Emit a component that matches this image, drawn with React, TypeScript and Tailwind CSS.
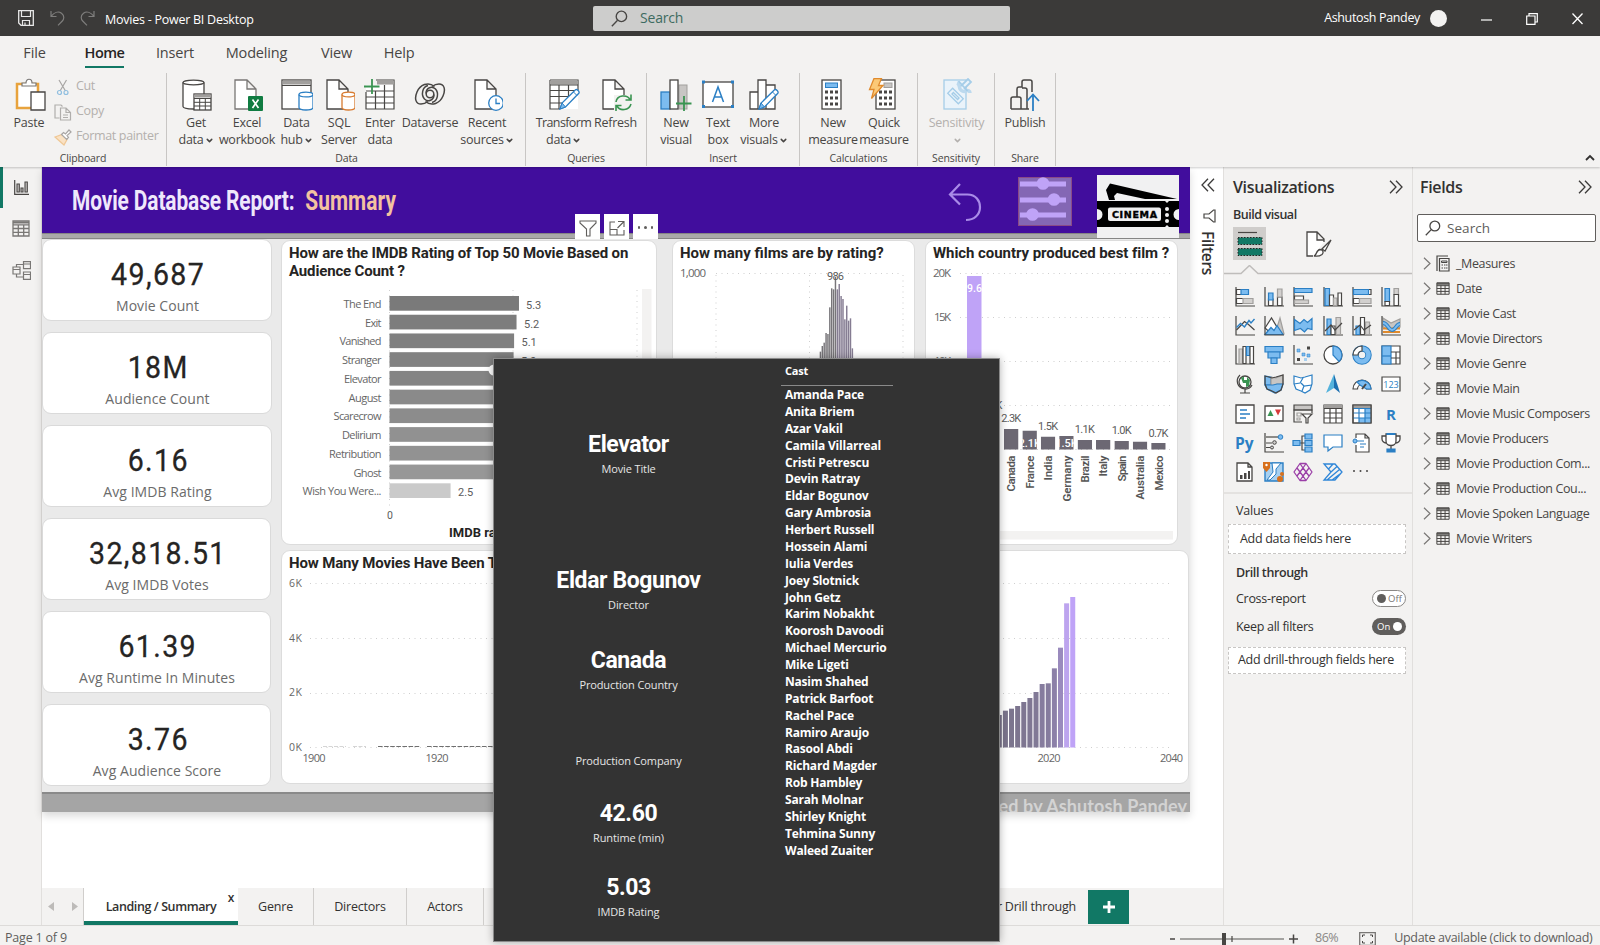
import React from "react";
import { ChevronDown } from "lucide-react";

const K = "#484644";
const G = "#a19f9d";
const B = "#2b7fc4";
const L = "#7cbcf0";

type IconProps = { w?: number; h?: number; vb?: string; className?: string; children: React.ReactNode };
function Svg({ w = 20, h = 20, vb, className, children }: IconProps) {
  return (
    <svg width={w} height={h} viewBox={vb ?? `0 0 ${w} ${h}`} fill="none" className={"block shrink-0 " + (className ?? "")}>
      {children}
    </svg>
  );
}

function Magnifier({ size = 16, color = K }: { size?: number; color?: string }) {
  return (
    <Svg w={size} h={size} vb="0 0 16 16">
      <circle cx="9.8" cy="6" r="4.9" stroke={color} strokeWidth="1.3" />
      <path d="M6.2 9.6L.8 15.2" stroke={color} strokeWidth="1.3" />
    </Svg>
  );
}

function DoubleChevron({ left, className }: { left?: boolean; className?: string }) {
  return (
    <Svg w={14} h={14} className={className}>
      <path d={left ? "M7 .8L1 7l6 6.200M13 .8L7 7l6 6.200" : "M1 .8L7 7l-6 6.200M7 .8L13 7l-6 6.200"} stroke="#3b3a39" strokeWidth="1.300" />
    </Svg>
  );
}

/* ---------- title bar ---------- */
function TitleBar() {
  return (
    <div className="flex h-9 shrink-0 items-center bg-[#3b3a39] text-white">
      <div className="flex w-[593px] items-center pl-[18px]">
        <Svg w={16} h={16}>
          <path d="M.7.7h14.600v14.600H3L.7 13z" stroke="#e8e8e8" strokeWidth="1.300" />
          <path d="M3.500 1v5.500h9V1M4.500 15v-4.500h7V15M7 15v-2.500" stroke="#e8e8e8" strokeWidth="1.200" />
        </Svg>
        <Svg w={15} h={16} className="ml-[16px]">
          <path d="M1 1v5.500h5.500M1.300 6.200C4 2.600 8 .8 11.500 3.200c3.500 2.700 2.300 6.300.8 7.800L8 15.300" stroke="#7f7e7d" strokeWidth="1.200" />
        </Svg>
        <Svg w={15} h={16} className="ml-[15px]">
          <path d="M14 1v5.500H8.500M13.700 6.200C11 2.600 7 .8 3.500 3.200 0 5.900 1.200 9.500 2.700 11L7 15.300" stroke="#7f7e7d" strokeWidth="1.200" />
        </Svg>
        <span className="mt-[4px] ml-[10px] text-[12.500px] tracking-[-0.25px]">Movies - Power BI Desktop</span>
      </div>
      <div className="flex h-[25px] w-[417px] items-center rounded-[2px] bg-[#cdcdcc] pl-[18px]">
        <Magnifier size={17} />
        <span className="mb-[2px] ml-[12px] text-[14px] tracking-[-0.2px] text-[#3d6b60]">Search</span>
      </div>
      <div className="flex flex-1 items-center justify-end pr-[17px]">
        <span className="text-[12.500px] tracking-[-0.350px]">Ashutosh Pandey</span>
        <div className="ml-[10px] size-[17px] rounded-full bg-[#f3f2f1]" />
        <Svg w={11} h={12} className="ml-[34px]"><path d="M0 8h11" stroke="#fff" strokeWidth="1.200" /></Svg>
        <Svg w={12} h={12} className="mt-[2px] ml-[34px]">
          <path d="M.7 3h8.300v8.300H.7zM3 3V.7h8.300V9H9" stroke="#fff" strokeWidth="1.200" />
        </Svg>
        <Svg w={11} h={12} className="mt-[2px] ml-[34px]"><path d="M.5.500l10 10.500M10.500.5L.5 11" stroke="#fff" strokeWidth="1.300" /></Svg>
      </div>
    </div>
  );
}

/* ---------- ribbon ---------- */
const menu: [string, string][] = [
  ["File", "w-[21px]"], ["Home", "w-[39px] ml-[40px]"], ["Insert", "w-[36px] ml-[33px]"],
  ["Modeling", "w-[61px] ml-[33px]"], ["View", "w-[31px] ml-[34px]"], ["Help", "w-[30px] ml-[32px]"],
];

const cyl = (x: number, y: number, w: number, h: number, c: string, f = "#fff") => (
  <>
    <path d={`M${x} ${y + 2.500}v${h - 5}c0 3.300 ${w} 3.300 ${w} 0v-${h - 5}`} fill={f} stroke={c} strokeWidth="1.300" />
    <ellipse cx={x + w / 2} cy={y + 2.500} rx={w / 2} ry="2.400" fill={f} stroke={c} strokeWidth="1.300" />
  </>
);
const page = (x: number, w: number, c = K) => (
  <path d={`M${x} 2h${w - 9}l9 9v20h-${w}zM${x + w - 9} 2v9h9`} fill="#fff" stroke={c} strokeWidth="1.300" />
);
const pencil = (x: number, y: number) => (
  <g transform={`translate(${x} ${y})`}>
    <path d="M1 20l2-6L16.500.8c1.500-1 4.500 1.700 3.300 3.500L6.500 18z" fill="#fff" stroke={B} strokeWidth="1.300" />
    <path d="M3 14l3.500 4L1 20zM14.500 3l3.500 3.500" stroke={B} fill={L} />
  </g>
);
const calc = (x: number) => (
  <>
    <rect x={x} y="2" width="19" height="29" fill="#fff" stroke={K} strokeWidth="1.300" />
    {[0, 1, 2].flatMap((r) => [0, 1, 2].map((c) => <rect key={`${r}${c}`} x={x + 3 + c * 5} y={12.500 + r * 6} width="3" height="3" fill={K} />))}
  </>
);
const icons: Record<string, React.ReactNode> = {
  get: <>{cyl(3, 2, 21, 29, K)}<rect x="14" y="16" width="17" height="16" fill="#fff" stroke={K} strokeWidth="1.300" /><path d="M14 18h17" stroke={G} strokeWidth="3" /><path d="M14 20.500h17M14 24.300h17M14 28h17M19.700 20v12M25.300 20v12" stroke={K} /></>,
  excel: <>{page(4, 21, "#797775")}<rect x="17" y="18" width="15" height="15" rx="1" fill="#107c41" /><path d="M21.500 21.500l6 8.500m0-8.500l-6 8.500" stroke="#fff" strokeWidth="1.700" /></>,
  hub: <><rect x="1" y="2" width="29" height="29" fill="#fff" stroke={K} strokeWidth="1.300" /><path d="M1.500 4.500h28" stroke={G} strokeWidth="4" /><path d="M1 7.500h29" stroke={K} />{cyl(18, 14, 14, 18, B)}</>,
  sql: <>{page(4, 21)}{cyl(19, 14, 13, 18, "#d87b30")}</>,
  enter: <><path d="M2 7h28v24H2z" fill="#fff" /><path d="M12 2h18v29H2V14M2 13h28M2 19h28M2 25h28M11.500 13v18M20.500 7v24" stroke={K} strokeWidth="1.200" /><path d="M13 4.500h17" stroke={G} strokeWidth="4" /><path d="M0 8.500h15.500M8 1v15" stroke="#3a9452" strokeWidth="1.800" /></>,
  dataverse: (
    <g stroke={K} strokeWidth="1.500">
      <path d="M20.500 8.500C14 3 6 7 3 14c-3 7-1 12 4 12 3 0 5-1 7-2.500" />
      <path d="M11.500 23.500C18 29 26 25 29 18c3-7 1-12-4-12-3 0-5 1-7 2.500" />
      <path d="M14 7.500C8 9 7 17 10.500 21c3.500 3.500 9.500 1.500 9.500-4.500" />
      <path d="M18 24.500C24 23 25 15 21.500 11 18 7.500 12 9.500 12 15.500" />
      <circle cx="16" cy="16" r="3.800" />
    </g>
  ),
  recent: <>{page(4, 21)}<circle cx="25" cy="25" r="7.300" fill="#fff" stroke={B} strokeWidth="1.300" /><path d="M25 20.500v5h4" stroke={B} strokeWidth="1.300" /></>,
  transform: <><rect x="2" y="2" width="28" height="29" fill="#fff" /><path d="M2 2h28v10M2 2v29h10M2 12.500h28M2 18.500h20M2 25h14M11 7v24M20.500 7v14" stroke={K} strokeWidth="1.200" /><path d="M2 4.500h28" stroke={G} strokeWidth="4" /><path d="M2 7h28" stroke={K} />{pencil(11, 11)}</>,
  refresh: <>{page(3, 21)}<path d="M14 17h18v16H14z" fill="#f3f2f1" /><path d="M16 24c1-7 11-8 14-2.500M31 16.500v5.500h-5.500M31 26c-2 6.500-11 7.500-14 2M16 33v-5.500h5.500" stroke="#3a9452" strokeWidth="1.600" /></>,
  visual: <><rect x="19" y="7" width="8" height="24" fill="#c8c6c4" stroke={G} /><rect x="1" y="14" width="9" height="17" fill={L} stroke={B} strokeWidth="1.300" /><rect x="10" y="2" width="8" height="29" fill="#fff" stroke={K} strokeWidth="1.300" /><path d="M16 25.500h15.500M24 18v15" stroke="#3a9452" strokeWidth="1.800" /></>,
  text: <><rect x="1" y="4" width="30" height="25" fill="#fff" stroke={K} strokeWidth="1.300" /><path d="M10.500 24L16 9l5.500 15M12.500 19h7" stroke={B} strokeWidth="1.500" />{[[0, 2.500], [29, 2.500], [0, 27], [29, 27]].map(([x, y], i) => <rect key={i} x={x} y={y} width="3" height="3" fill={B} />)}</>,
  more: <><path d="M2 14h8v17H2zM10 2h8v29h-8zM18 7h9v24h-9z" fill="#fff" stroke={K} strokeWidth="1.300" />{pencil(10, 11)}</>,
  measure: <>{calc(5)}<rect x="8.500" y="5" width="12" height="4.500" fill={L} stroke={B} /></>,
  quick: <>{calc(8)}<rect x="16" y="5" width="8" height="4.500" fill="#c8c6c4" stroke={G} /><path d="M6 .5h7.500l-3 7h4.500L3.500 20.500l2.500-9H1.500z" fill="#fbc977" stroke="#e08a2c" strokeWidth="1.300" /></>,
  sens: (
    <g stroke="#a5cde8" strokeWidth="1.300">
      <rect x="3" y="2" width="22" height="29" fill="#eaf3fa" />
      <rect x="-7.500" y="-3.500" width="15" height="7" transform="translate(14.500 18) rotate(45)" fill="#eaf3fa" />
      <rect x="-4" y="-1" width="8" height="2" transform="translate(14.500 18) rotate(45)" />
      <path d="M16 5c3 1 2 4 3 6s4 3 6 2 4 0 4 2" strokeWidth="3.500" stroke="#bcd9ee" />
      <path d="M20 8l7-7 3 3-7 7M17.500 3l9 10" fill="#eaf3fa" strokeWidth="1.800" />
    </g>
  ),
  publish: <><path d="M2 31V21a2 2 0 012-2h4V11a2 2 0 012-2h3V4a2 2 0 012-2h6a2 2 0 012 2v10M2 31h18M12 31V21a2 2 0 00-2-2H8M18 31V12a2 2 0 00-2-2h-3" stroke={K} strokeWidth="1.500" /><path d="M24 33V17M18 23l6-6.500 6 6.500" stroke={B} strokeWidth="1.800" /></>,
};

type Btn = { icon: string; a: string; b?: string; caret?: boolean; w: string; dim?: boolean; tight?: boolean };
function RibbonButton({ icon, a, b, caret, w, dim, tight }: Btn) {
  return (
    <div className={`flex shrink-0 flex-col items-center ${w} ${dim ? "text-[#b3b0ad]" : "text-[#484644]"}`}>
      <Svg w={32} h={34}>{icons[icon]}</Svg>
      <span className={`mt-[3px] h-[16px] text-[12.500px] leading-[16px] whitespace-nowrap ${tight ? "tracking-[-0.6px]" : "tracking-[-0.25px]"}`}>{a}</span>
      <span className="flex h-[17px] items-center text-[12.500px] leading-[17px] tracking-[-0.25px] whitespace-nowrap">
        {b}{caret && <ChevronDown size={9} strokeWidth={4} className="mt-[2px] ml-[1px]" />}
      </span>
    </div>
  );
}
const groups: { name: string; w: string; items: Btn[] }[] = [
  { name: "Data", w: "w-[359px] pl-px", items: [
    { icon: "get", a: "Get", b: "data", caret: true, w: "w-[56px]" }, { icon: "excel", a: "Excel", b: "workbook", w: "w-[46px]" },
    { icon: "hub", a: "Data", b: "hub", caret: true, w: "w-[53px]" }, { icon: "sql", a: "SQL", b: "Server", w: "w-[32px]" },
    { icon: "enter", a: "Enter", b: "data", w: "w-[50px]" }, { icon: "dataverse", a: "Dataverse", w: "w-[50px]" },
    { icon: "recent", a: "Recent", b: "sources", caret: true, w: "w-[64px]" }] },
  { name: "Queries", w: "w-[121px]", items: [{ icon: "transform", a: "Transform", b: "data", caret: true, w: "w-[75px]", tight: true }, { icon: "refresh", a: "Refresh", w: "w-[29px]" }] },
  { name: "Insert", w: "w-[153px]", items: [{ icon: "visual", a: "New", b: "visual", w: "w-[58px]" }, { icon: "text", a: "Text", b: "box", w: "w-[26px]" }, { icon: "more", a: "More", b: "visuals", caret: true, w: "w-[66px]" }] },
  { name: "Calculations", w: "w-[118px]", items: [{ icon: "measure", a: "New", b: "measure", w: "w-[66px]" }, { icon: "quick", a: "Quick", b: "measure", w: "w-[36px]" }] },
  { name: "Sensitivity", w: "w-[77px]", items: [{ icon: "sens", a: "Sensitivity", caret: true, w: "w-[77px]", dim: true }] },
  { name: "Share", w: "w-[61px]", items: [{ icon: "publish", a: "Publish", w: "w-[60px]" }] },
];

function Ribbon() {
  return (
    <div className="relative z-10 flex h-[131px] shrink-0 flex-col bg-[#f3f2f1] text-[#484644] shadow-[0_1px_2px_rgba(0,0,0,0.2)]">
      <div className="flex h-[37px] pl-[24px] text-[14.500px] tracking-[-0.15px]">
        {menu.map(([m, w]) => (
          <div key={m} className={`flex h-[32px] flex-col items-center ${w} ${m === "Home" ? "border-b-[2.500px] border-[#117865] font-semibold tracking-[-0.5px] text-[#252423]" : ""}`}>
            <span className="mt-[7px] leading-[20px] whitespace-nowrap">{m}</span>
          </div>
        ))}
      </div>
      <div className="flex h-[93px]">
        <div className="flex w-[167px] flex-col border-r border-[#c8c6c4]">
          <div className="flex h-[79px] pt-[5px] pl-[14px]">
            <div className="flex w-[30px] flex-col items-center">
              <Svg w={32} h={34} className="ml-[4px]">
                <path d="M2 6h21v24H2z" fill="#fff" stroke="#e8a33d" strokeWidth="2.500" />
                <path d="M7 8V5h4c0-5 6-5 6 0h4v3z" fill="#fff" stroke="#797775" strokeWidth="1.200" />
                <path d="M16 14h14v18H16z" fill="#fff" stroke={K} strokeWidth="1.300" />
              </Svg>
              <span className="mt-[3px] text-[12.500px] leading-[16px] tracking-[-0.2px]">Paste</span>
            </div>
            <div className="-mt-px ml-[10px] flex flex-col text-[12.500px] tracking-[-0.35px] text-[#b3b0ad]">
              <div className="flex h-[21px] items-center">
                <Svg w={18} h={17}><path d="M5 1l6.500 11M12.500 1L6 12" stroke="#a8a6a4" strokeWidth="1.200" /><circle cx="5.500" cy="13.500" r="2" stroke="#90bfe0" strokeWidth="1.200" /><circle cx="12" cy="13.500" r="2" stroke="#90bfe0" strokeWidth="1.200" /></Svg>
                <span className="mb-[2px] ml-[4px]">Cut</span>
              </div>
              <div className="mt-[4px] flex h-[21px] items-center">
                <Svg w={18} h={17}><path d="M5.500 14H1V1h6l1.500 1.500M6.500 4h5.500l4.500 4.500V16h-10zM12 4v4.500h4.500M9 11h5M9 13.500h5" stroke="#b0aeac" strokeWidth="1.200" /></Svg>
                <span className="mb-[2px] ml-[4px]">Copy</span>
              </div>
              <div className="mt-[4px] flex h-[21px] items-center">
                <Svg w={18} h={17}><path d="M1 8l7-2.500 5 5-3 5.500z" fill="#fae2c4" stroke="#efc795" strokeWidth="1.200" /><path d="M7.500 5.500l2-2 2 1.500L15 1l2 2-4 3.500 1.500 2-1.800 2z" fill="#fff" stroke="#a8a6a4" strokeWidth="1.200" /></Svg>
                <span className="mb-[2px] ml-[4px] whitespace-nowrap">Format painter</span>
              </div>
            </div>
          </div>
          <div className="text-center text-[10.500px] leading-[15px] tracking-[-0.1px]">Clipboard</div>
        </div>
        {groups.map((g) => (
          <div key={g.name} className={`flex flex-col border-r border-[#c8c6c4] ${g.w}`}>
            <div className="flex h-[79px] pt-[5px]">{g.items.map((b, i) => <RibbonButton key={i} {...b} />)}</div>
            <div className="text-center text-[10.500px] leading-[15px] tracking-[-0.1px]">{g.name}</div>
          </div>
        ))}
        <div className="flex flex-1 items-end justify-end pr-[5px] pb-[5px]">
          <Svg w={10} h={7}><path d="M1 6l4-4 4 4" stroke="#323130" strokeWidth="1.800" /></Svg>
        </div>
      </div>
    </div>
  );
}

/* ---------- left navigation ---------- */
function TableGlyph({ w, h, c = "#797775" }: { w: number; h: number; c?: string }) {
  return (
    <Svg w={w} h={h} vb="0 0 18 17">
      <path d="M1 1h16v15H1zM1 4.800h16M1 8.500h16M1 12.300h16M6.300 4.500V16M11.700 4.500V16" stroke={c} strokeWidth="1.300" />
      <path d="M1 2.500h16" stroke={c} strokeWidth="2" />
    </Svg>
  );
}
function LeftNav() {
  return (
    <div className="flex w-[42px] shrink-0 flex-col border-r border-[#e1dfdd] bg-[#f3f2f1]">
      <div className="flex h-[41px] items-start border-l-[3px] border-[#117865] pt-[13px] pl-[11px]">
        <Svg w={15} h={15}><path d="M.7 0v14.300H15" stroke={K} strokeWidth="1.200" /><path d="M3 4h2.300v8H3zM7 8h2v4H7zM11 2h2.300v10H11z" fill="#c8c6c4" stroke={K} strokeWidth="1.100" /></Svg>
      </div>
      <div className="mt-[12px] pl-[12px]"><TableGlyph w={18} h={17} /></div>
      <div className="mt-[24px] pl-[12px]">
        <Svg w={19} h={19}><path d="M1 6h7v7H1zM1 8.500h7M11.500.7h7v7h-7zM11.500 3h7M11.500 11h7v7.300h-7zM11.500 13.500h7M4.500 6V3.500h7M4.500 13v3h7" stroke="#797775" strokeWidth="1.200" /></Svg>
      </div>
    </div>
  );
}

/* ---------- report ---------- */
const kpis = [
  ["49,687", "Movie Count"], ["18M", "Audience Count"], ["6.16", "Avg IMDB Rating"],
  ["32,818.51", "Avg IMDB Votes"], ["61.39", "Avg Runtime In Minutes"], ["3.76", "Avg Audience Score"],
];

const axis = { fontFamily: "'Open Sans', sans-serif", fontSize: 11.500, fill: "#666" };
const din = { fontFamily: "Roboto, sans-serif", fontSize: 11, fill: "#5c5c5c" };
const dots = { stroke: "#cfcfcf", strokeWidth: 1, strokeDasharray: "1 4.500" };

const titles = ["The End", "Exit", "Vanished", "Stranger", "Elevator", "August", "Scarecrow", "Delirium", "Retribution", "Ghost", "Wish You Were..."];
const ratings = [5.3, 5.2, 5.1, 5.08, 5.03, 5, 4.9, 4.8, 4.8, 4.7, 2.5];
const greys = ["#7a7a7a", "#7d7d7d", "#808080", "#828282", "#848484", "#8a8a8a", "#8c8c8c", "#919191", "#929292", "#979797", "#cacaca"];
const titleW = [38, 16.500, 42, 39.500, 37.500, 33, 48, 39.500, 52.500, 28, 79];

function RatingChart() {
  return (
    <svg width="374" height="264" viewBox="282 280 374 264" className="block">
      {[389.500, 513, 637].map((x) => <path key={x} d={`M${x} 290V508`} {...dots} />)}
      {titles.map((t, i) => (
        <g key={t}>
          <rect x="389.500" y={296 + i * 18.730} width={ratings[i] * 24.430} height="14.700" fill={greys[i]} />
          <text x="381.500" y={308 + i * 18.730} textAnchor="end" textLength={titleW[i]} {...axis} fontSize="11">{t}</text>
        </g>
      ))}
      <text x="526" y="309" {...din}>5.3</text>
      <text x="524" y="327.500" {...din}>5.2</text>
      <text x="521.500" y="346" {...din}>5.1</text>
      <text x="521" y="365" {...din}>5.0</text>
      <text x="458" y="495.500" {...din}>2.5</text>
      <text x="390" y="519" textAnchor="middle" {...din} fontSize="10.500">0</text>
      <text x="449" y="537" {...din} fontSize="13" fontWeight="700" fill="#252423">IMDB rating</text>
      <rect x="642" y="289" width="9.500" height="220" fill="#f3f2f1" />
      <circle cx="494" cy="370" r="5.500" fill="#fff" />
    </svg>
  );
}

const hist = [575, 558, 548, 519, 522, 442, 385, 388, 350, 388, 372, 408, 417, 478, 437, 482, 475, 565];
function FilmsChart() {
  return (
    <svg width="241" height="280" viewBox="673 262 241 280" className="block">
      <path d="M716 273.500H903" {...dots} />
      {[716, 809.500, 903].map((x) => <path key={x} d={`M${x} 275V450`} {...dots} />)}
      <text x="680" y="277" textLength="26" {...axis}>1,000</text>
      {hist.map((t, i) => (
        <rect key={i} x={819.700 + i * 1.880} y={160 + t / 3} width="1.450" height={(700 - t) / 3} fill={i < 9 ? "#777579" : "#857c92"} />
      ))}
      <text x="827" y="280" textLength="17" {...din}>986</text>
    </svg>
  );
}

const countries: [string, number, string, boolean][] = [
  ["Canada", 429, "2.3K", true], ["France", 430.500, "2.1K", false], ["India", 436.500, "1.5K", true], ["Germany", 436, "1.5K", false],
  ["Brazil", 440, "1.1K", true], ["Italy", 440, "", false], ["Spain", 441, "1.0K", true], ["Australia", 441.500, "", false], ["Mexico", 443, "0.7K", true],
];
const countryLabelY = [422, 0, 429.500, 0, 433, 0, 433.500, 0, 436.500];
const countryW = [36, 33, 25, 46, 27, 21, 26, 44, 35];
function CountryChart() {
  return (
    <svg width="251" height="280" viewBox="926 262 251 280" className="block">
      {[273.500, 317.500, 361.500, 405.500, 449.500].map((y) => <path key={y} d={`M960 ${y}H1172`} {...dots} />)}
      <text x="933" y="277" textLength="18" {...axis}>20K</text>
      <text x="934" y="321" textLength="17" {...axis}>15K</text>
      <text x="934" y="365" textLength="17" {...axis}>10K</text>
      <rect x="967" y="276" width="14.500" height="173.500" fill="#bfa3f7" />
      <text x="974.500" y="292" textAnchor="middle" {...din} fontWeight="500" fill="#fff" fontSize="10.500">9.6</text>
      <text x="995.500" y="409" {...din}>K</text>
      {countries.map(([n, y, v, above], i) => {
        const x = 1004 + i * 18.400;
        return (
          <g key={n}>
            <svg x={x} y={y} width="14.500" height={449.500 - y} overflow="hidden">
              <rect width="14.500" height="30" fill="#6c6873" />
              {!above && v && <text x="7.250" y={447 - y} textAnchor="middle" {...din} fontSize="11" fontWeight="500" fill="#fff">{v}</text>}
            </svg>
            {above && <text x={x + 7.250} y={countryLabelY[i]} textAnchor="middle" textLength="20" {...din}>{v}</text>}
            <text transform={`translate(${x + 11.300} 455.500) rotate(-90)`} textAnchor="end" textLength={countryW[i]} {...din} fontSize="11.500" fontWeight="600" fill="#555">{n}</text>
          </g>
        );
      })}
      <rect x="960" y="531" width="213" height="8.500" fill="#f3f2f1" />
    </svg>
  );
}

const yearTops = [465, 452, 446, 438, 426, 414, 396, 372, 370, 325, 263, 130, 111];
const yearFill = ["#7b748c", "#7b748c", "#7c758e", "#7d758f", "#7e7691", "#7f7793", "#817996", "#867c9e", "#867c9e", "#8c80a8", "#9a8abd", "#bda4ee", "#bfa3f7"];
function YearsChart() {
  return (
    <svg width="906" height="210" viewBox="282 572 906 210" className="block">
      {[583.500, 638.500, 693.500, 747.500].map((y) => <path key={y} d={`M310 ${y}H1173`} {...dots} />)}
      {["6K", "4K", "2K", "0K"].map((t, i) => <text key={t} x="289" y={587 + i * 54.700} textLength="13" {...axis} fontSize="10.500">{t}</text>)}
      <path d="M323 746.500H346M353 746.500H366" stroke="#d5d5d5" strokeDasharray="4 1.500" />
      <path d="M378 746.500H420M427 746.500H500" stroke="#6f6f6f" strokeWidth="1.200" strokeDasharray="4.600 1.500" />
      {yearTops.map((t, i) => (
        <rect key={i} x={996.800 + i * 6.120} y={560 + t / 3} width="5" height={(562.500 - t) / 3} fill={yearFill[i]} />
      ))}
      {([["1900", 314], ["1920", 437], ["2020", 1049], ["2040", 1171.500]] as [string, number][]).map(([t, x]) => (
        <text key={t} x={x} y="762" textAnchor="middle" textLength="23" {...axis} fontSize="11">{t}</text>
      ))}
    </svg>
  );
}

function ChartCard({ title, className, text, children }: { title: string; className: string; text: string; children: React.ReactNode }) {
  return (
    <div className={`shrink-0 overflow-hidden rounded-[9px] border border-[#dcdcdc] bg-white ${className}`}>
      <div className={`mt-[3px] ml-[7px] font-['Roboto',sans-serif] text-[15px] leading-[18px] font-bold text-[#252423] ${text}`}>{title}</div>
      {children}
    </div>
  );
}

function Banner() {
  return (
    <div className="relative flex h-[66px] shrink-0 items-start bg-[#410d9d]">
      <div className="mt-[17px] ml-[30px] flex origin-left scale-x-[0.76] font-['Roboto',sans-serif] text-[27.500px] leading-[34px] font-bold tracking-[-0.15px] whitespace-nowrap text-[#efe8fb]">
        Movie Database Report: <span className="ml-[14px] tracking-[0.1px] text-[#f3c2a0]">Summary</span>
      </div>
      <div className="absolute top-[7px] right-[11px] flex items-start">
        <Svg w={34} h={40} className="mt-[9px]">
          <path d="M12 1L2 11.500l10 10M2 11.500h17.500C28 11.500 32 18 32 24c0 8-6 13-14 13" stroke="#a98be8" strokeWidth="2.200" />
        </Svg>
        <Svg w={54} h={50} className="mt-[3px] ml-[36px]">
          <rect x=".5" y=".5" width="53" height="48" fill="#8467b4" stroke="#8a4a86" />
          <path d="M2 7h46M2 23h46M2 38h46" stroke="#bfa3f7" strokeWidth="5" />
          <circle cx="25" cy="6.500" r="6.300" fill="#bfa3f7" /><circle cx="36" cy="22.500" r="6.300" fill="#bfa3f7" /><circle cx="14.500" cy="37.500" r="6.300" fill="#bfa3f7" />
        </Svg>
        <Svg w={82} h={63} className="mt-px ml-[25px]">
          <rect width="82" height="63" fill="#f1f1f2" />
          <path d="M9 15l4-6.500L80 24H48L20 18l-3 3 1 4h-6z" fill="#000" />
          <path d="M0 26h68l2 2 2-2h10v8a5.500 5.500 0 000 11v7H72l-2-2-2 2H0v-7a5.500 5.500 0 000-11z" fill="#000" />
          <rect x="11" y="32.500" width="53" height="13.500" rx="2" fill="#f1f1f2" />
          <g fill="#f1f1f2"><circle cx="70" cy="34" r="2" /><circle cx="70" cy="40" r="2" /><circle cx="70" cy="46" r="2" /></g>
          <text x="37.500" y="43" textAnchor="middle" fontFamily="'DejaVu Sans', sans-serif" fontWeight="900" fontSize="9.500" textLength="45" stroke="#000" strokeWidth=".4" fill="#000">CINEMA</text>
        </Svg>
      </div>
    </div>
  );
}

function Report() {
  return (
    <div className="relative flex h-[645px] w-[1148px] shrink-0 flex-col bg-[#eaeaea] shadow-[0_4px_8px_rgba(0,0,0,0.15)]">
      <Banner />
      <div className="h-[6px] shrink-0 border-y border-[#858585] bg-[#a9a9a9]" />
      <div className="flex h-[553px] shrink-0">
        <div className="flex w-[230px] flex-col gap-[11.500px]">
          {kpis.map(([v, l], i) => (
            <div key={l} className={`flex h-[81.500px] shrink-0 flex-col items-center rounded-[9px] border border-[#dadada] bg-white ${i < 3 ? "w-[230px]" : "w-[229px]"}`}>
              <span className="mt-[17px] ml-[3px] scale-x-[0.92] font-['Roboto',sans-serif] text-[31px] leading-[36px] tracking-[1.500px] text-[#252423] [-webkit-text-stroke:0.3px_#252423]">{v}</span>
              <span className="mt-[3px] ml-px text-[14px] leading-[20px] tracking-[0.05px] text-[#6b6b6b]">{l}</span>
            </div>
          ))}
        </div>
        <div className="ml-[9px] flex flex-col pt-px">
          <div className="flex">
            <ChartCard title="How are the IMDB Rating of Top 50 Movie Based on Audience Count ?" className="h-[305px] w-[376px]" text="w-[352px] tracking-[-0.15px]"><RatingChart /></ChartCard>
            <ChartCard title="How many films are by rating?" className="ml-[15px] h-[305px] w-[243px]" text="tracking-[0px]"><FilmsChart /></ChartCard>
            <ChartCard title="Which country produced best film ?" className="ml-[10px] h-[305px] w-[253px]" text="tracking-[-0.06px]"><CountryChart /></ChartCard>
          </div>
          <ChartCard title="How Many Movies Have Been T" className="mt-[5px] h-[234px] w-[908px]" text="tracking-[-0.15px]"><YearsChart /></ChartCard>
        </div>
      </div>
      <div className="flex h-[20px] shrink-0 items-start justify-end overflow-hidden border-t-2 border-[#8a8a8a] bg-[#a5a5a5] pr-[3px]">
        <span className="font-['Lato',sans-serif] text-[18px] leading-[24px] font-bold tracking-[0.1px] text-[#d3d3d3]">ed by Ashutosh Pandey</span>
      </div>
      <div className="absolute top-[47px] left-[533px] flex gap-[4px] text-[#605e5c]">
        <div className="flex h-[25px] w-[25px] items-center justify-center bg-white pt-[3px]"><Svg w={18} h={18}><path d="M1 2h16v2l-6 6v7H7.500v-7L1 4z" stroke="#605e5c" strokeWidth="1.100" /></Svg></div>
        <div className="flex h-[25px] w-[25px] items-center justify-center bg-white pt-[3px]"><Svg w={16} h={16}><path d="M6 2H1v13h14v-5M9 1.500h6V7M15 1.500L8.500 8M1 9.500h7V15" stroke="#605e5c" strokeWidth="1.100" /></Svg></div>
        <div className="flex h-[25px] w-[25px] items-center justify-center gap-[4px] bg-white pt-[2px]">{[0, 1, 2].map((i) => <i key={i} className="size-[2.500px] rounded-full bg-[#605e5c]" />)}</div>
      </div>
    </div>
  );
}

const tab = "flex items-center justify-center border-r border-[#d0cecc] pt-px";
function PageTabs() {
  return (
    <div className="flex h-[37px] shrink-0 bg-[#f3f2f1] text-[12.500px] tracking-[-0.2px] text-[#323130]">
      <div className="flex w-[42px] items-center gap-[18px] border-r border-[#d0cecc] pl-[6px]">
        <Svg w={6} h={9}><path d="M6 0v9L0 4.500z" fill="#bdbbb9" /></Svg>
        <Svg w={6} h={9}><path d="M0 0v9l6-4.500z" fill="#bdbbb9" /></Svg>
      </div>
      <div className="relative flex w-[154px] items-center justify-center border-b-4 border-[#117865] bg-white font-semibold tracking-[-0.4px]">
        <span className="mt-[5px]">Landing / Summary</span>
        <span className="absolute top-px right-[4px] text-[12px]">x</span>
      </div>
      <div className={`${tab} w-[76px]`}>Genre</div>
      <div className={`${tab} w-[93px]`}>Directors</div>
      <div className={`${tab} w-[77px]`}>Actors</div>
      <div className="flex w-[604px] items-center justify-end pt-px pr-[12px]">Actor Drill through</div>
      <div className="mt-[2px] flex h-[34px] w-[41px] items-center justify-center bg-[#117865]">
        <Svg w={12} h={12}><path d="M6 0v12M0 6h12" stroke="#fff" strokeWidth="2.800" /></Svg>
      </div>
    </div>
  );
}

/* ---------- visualizations pane ---------- */
const ax = <path d="M1 0v19h19" stroke={K} strokeWidth="1.200" />;
const s = (d: string, stroke = K, fill = "none", sw = 1.200) => <path d={d} stroke={stroke} fill={fill} strokeWidth={sw} />;
const viz: React.ReactNode[] = [
  <>{ax}{s("M1.500 2.500h6v5h-6z", K, "#fff")}{s("M6 2.500h7.500v5H6z", B, L)}{s("M1.500 11.500h8v5h-8z", K, "#fff")}{s("M8 11.500h10v5H8z", G, "#d2d0ce")}</>,
  <>{ax}{s("M4.500 12h4.500v6.500H4.500z", K, "#fff")}{s("M4.500 6h4.500v7H4.500z", B, L)}{s("M13.500 10h4.500v8.500h-4.500z", K, "#fff")}{s("M13.500 2h4.500v8h-4.500z", G, "#d2d0ce")}</>,
  <>{ax}{s("M1.500 1.500h17.500v4H1.500z", B, L)}{s("M1.500 9h9v4h-9z", K, "#fff")}{s("M1.500 13h14v3.500h-14z", G, "#d2d0ce")}</>,
  <>{ax}{s("M2 1.500h4.500v17H2z", B, L)}{s("M6.500 8h4v10.500h-4z", K, "#fff")}{s("M10.500 11h3.500v7.500h-3.500z", G, "#d2d0ce")}{s("M15 6h3.500v12.500H15z", K, "#fff")}</>,
  <>{ax}{s("M11.500 2.500h7.500v5h-7.500z", K, "#fff")}{s("M1.500 2.500h15v5h-15z", B, L)}{s("M1.500 11.500h6v5h-6z", K, "#fff")}{s("M7.500 11.500H19v5H7.500z", G, "#d2d0ce")}</>,
  <>{ax}{s("M4 1.500h4.500v13H4z", B, L)}{s("M4 14.500h4.500v4H4z", K, "#fff")}{s("M13 1.500h4.500v6H13z", G, "#d2d0ce")}{s("M13 7.500h4.500v11H13z", K, "#fff")}</>,
  <>{ax}{s("M1.500 14l8-8.500 4 3 6 5.500", K)}{s("M1.500 11.500l4-4 4 3.500 4.500-6.500 2 2.500 3.500-4", B, "none", 1.400)}</>,
  <>{s("M11 18l5-16 4 16z", G, "#c8c6c4")}{s("M1 12l6.500-10 6 10-6 6z", K, "#fff")}{s("M1 18.500l6-7 3 3 3-5 6 9z", B, L)}{ax}</>,
  <>{ax}{s("M1.500 3.500l5.500 4 4-4 3.500 3 4.500-4v11l-4.500-1-3 3.500-4-3.500-6 2z", B, L)}</>,
  <>{ax}{s("M4 3h4v15.500H4z", B, L)}{s("M13 1.500h4.500v17H13z", G, "#d2d0ce")}{s("M8 10h4v8.500H8z", K, "#fff")}{s("M2 15l6-6 4 5 7-7", K)}</>,
  <>{ax}{s("M4 10h4v8.500H4z", B, L)}{s("M8.500 1.500h4v17h-4z", K, "#fff")}{s("M13.500 6h4v12.500h-4z", G, "#d2d0ce")}{s("M2 14l6-5 4 5 7-5", K)}</>,
  <>{s("M2 2l8 5 9-4v8l-9 4-8-4z", G, "#c8c6c4")}{s("M2 12.500h17M2 16h17", "#e08a2c", "none", 2)}{s("M2 7c5 0 5 7 9 7s4-6 8-6", B, "none", 4)}{s("M2 7c5 0 5 7 9 7s4-6 8-6", L, "none", 2)}{ax}</>,
  <>{ax}{s("M4 4h3.500v14.500H4z", G, "#d2d0ce")}{s("M8 1.500h3v17H8z", K, "#fff")}{s("M11.500 1.500h3.500v9h-3.500z", B, L)}{s("M15 1.500h3.500v17H15z", K, "#fff")}</>,
  <>{s("M1 1.500h18v5.500H1z", B, L)}{s("M4 7h12v6H4z", B, L)}{s("M7 13h6v5.500H7z", B, L)}</>,
  <>{ax}<path d="M4 4h3v3H4zM9 8h3v3H9zM14 9h3v3h-3z" fill={L} stroke={B} strokeWidth=".5" /><path d="M14 1.500h3v3h-3zM4 13h3v3H4z" fill={K} /><path d="M11 13h3v3h-3z" fill="#a8d0f0" /></>,
  <><circle cx="10" cy="10" r="9" fill="#fff" stroke={K} strokeWidth="1.300" />{s("M10 10V1a9 9 0 016 15.500z", B, L)}</>,
  <><circle cx="10" cy="10" r="6.500" stroke={B} strokeWidth="6.500" /><circle cx="10" cy="10" r="6.500" stroke={L} strokeWidth="4.600" />{s("M10 1a9 9 0 00-9 9h5a4 4 0 014-4z", K, "#fff")}</>,
  <>{s("M1 1h18v18H1z", K, "#fff")}{s("M1 1h9v18H1z", B, L)}{s("M10 7h9M10 13h9M15 7v12", K)}{s("M1 11h9", B)}</>,
  <><circle cx="10" cy="8" r="6" fill="#fff" stroke={K} strokeWidth="1.300" /><path d="M6 4l3-1.500V6h3V3l3 3-1 6-3 1V9H8z" fill="#3a9452" />{s("M5 1c-5 5-3 13 5 14 4 .3 6-2 7-4M10 15v3.500M5 19h10")}</>,
  <>{s("M1 2l6 1v8H1z", B, L)}{s("M7 3l5 1 7-3v9h-6l-4 3-2-2z", G, "#c8c6c4")}{s("M1 11h8l4-1h6l-2 6-6 3-8-4z", B, L)}{s("M1 2l7 2 4-1 7-2v9l-2 6-5 3-4-2-5-2-2-5z")}</>,
  <>{s("M1 2l7 2 4-1 7-2v9l-2 6-5 3-4-2-5-2-2-5z", B, "#fff")}{s("M1 10l6-1 3-5M8 9l3 3 8-1M11 12l-2 5", B)}</>,
  <><path d="M11 0L3 19l8-5z" fill="#54b2dc" /><path d="M11 0v14l6 5z" fill="#1b6fb0" /></>,
  <>{s("M1 15a9 9 0 0118 0h-4.500a4.500 4.500 0 00-9 0z", K, "#fff")}{s("M5 8a9 9 0 0114 7h-4.500L8 11z", B, L)}{s("M10 15l4-5", K, "none", 2)}</>,
  <>{s("M1 3h18v14H1z", K, "#fff")}<text x="10" y="13.500" textAnchor="middle" fontSize="9" fontFamily="'Open Sans', sans-serif" fill={B}>123</text></>,
  <>{s("M1 1h18v18H1z", K, "#fff", 1.300)}{s("M5 6h7M5 10h10M5 14h6", B, "none", 1.700)}</>,
  <>{s("M1 2h18v15H1z", K, "#fff", 1.300)}<path d="M3.500 12L6.500 6l3 6z" fill="#3a9452" /><path d="M11 5.500h6l-3 6z" fill="#d83b3b" /></>,
  <>{s("M1 1h18v5H1z", K, "#c8c6c4")}{s("M9 18H1V6h18v3", K)}{s("M4 9h4v3H4zM4 14h3v2H4z", G)}{s("M9 10h10l-4 4v5h-2v-5z", K, "#fff")}</>,
  <>{s("M1 1h18v18H1z", K, "#fff")}{s("M1 2.500h18", G, "none", 3)}{s("M1 4.500h18M1 9h18M1 14h18M7 4v15M13 4v15", K)}</>,
  <>{s("M1 1h18v18H1z", K, "#fff")}<path d="M13 4.500h6V19H7v-5h6z" fill={L} />{s("M1 2.500h18", G, "none", 3)}{s("M1 4.500h18M1 9h18M1 14h18M7 4v15M13 4v15", B)}{s("M1 1h18v18H1z")}</>,
  <text x="5" y="15.500" fontSize="15" fontWeight="700" fontFamily="'Open Sans', sans-serif" fill={B}>R</text>,
  <text x="0" y="15.500" fontSize="15.500" fontWeight="700" fontFamily="'Open Sans', sans-serif" fill={B}>Py</text>,
  <>{ax}{s("M2 4h12", K)}{s("M2 10h6M2 14.500h4", K)}<circle cx="16.500" cy="4" r="2.300" fill={L} stroke={B} /><circle cx="10.500" cy="9.500" r="1.800" fill="#d2d0ce" stroke={K} /><circle cx="8" cy="14.500" r="1.500" fill="#d2d0ce" stroke={K} /></>,
  <>{s("M6 10h6M9 10V3h3M9 10v7h3", K)}{s("M0 7.500h7v5H0z", B, L)}{s("M12 1h7v5h-7zM12 7.500h7v5h-7zM12 14h7v5h-7z", B, L)}</>,
  <>{s("M1 2h18v12H10l-5 4v-4H1z", B, "#fff")}</>,
  <>{s("M4 5V1h9l4 4v14H4v-7M13 1v4h4", K, "#fff")}{s("M5 8h7M8 11h6M8 14h4", B)}<circle cx="3" cy="8" r="2" fill={L} stroke={B} /></>,
  <>{s("M5 1h10v7c0 6-10 6-10 0zM5 3H1v3c0 2 2 4 4 4M15 3h4v3c0 2-2 4-4 4M10 13v3", K, "#fff", 1.300)}{s("M5.500 1h9", B, "none", 2)}{s("M6 16h8v3H6z", B, B)}</>,
  <>{s("M2 1h11l4 4v14H2zM13 1v4h4", K, "#fff", 1.300)}<path d="M5 13h2.500v4H5zM9 11h2.500v6H9zM13 9h2v8h-2z" fill={K} /></>,
  <>{s("M1 1h18v18H1z", B, "#a8d0f0", 1.400)}<path d="M8 1h9l-5 6v5l-6 6H3l6-8z" fill="#fff" stroke={B} /><path d="M-1 0h7v6l-3.500 4L-1 6z" fill="#d8701c" /><circle cx="2.500" cy="3" r="1.200" fill="#fff" /><circle cx="18" cy="12" r="2" fill="#d8701c" /><circle cx="16" cy="17" r="3" fill="#d8701c" /></>,
  <g stroke="#9b3fa8" strokeWidth="1.300" strokeLinejoin="round">
    <path d="M1 10l6-8.500h6L19 10l-6 8.500H7z" />
    <path d="M7 1.500l3 4.500 3-4.500M7 18.500l3-4.500 3 4.500M10 6l3 4-3 4-3-4zM7 10L4 6M13 10l3-4M7 10l-3 4M13 10l3 4" />
  </g>,
  <>{s("M1 2h11l7 8-7 8H1l7-8zM5.500 7L10 2M8 10l6-5.500M4 18L16.500 7.500M9 18l8-6", "#2f86d8", "none", 1.300)}</>,
  <><circle cx="2" cy="9" r="1" fill={K} /><circle cx="8.500" cy="9" r="1" fill={K} /><circle cx="15" cy="9" r="1" fill={K} /></>,
];

function VizPane() {
  return (
    <div className="flex w-[190px] shrink-0 flex-col border-r border-l border-[#e1dfdd] bg-[#f3f2f1] text-[#323130]">
      <div className="mt-[8px] flex h-[24px] items-center justify-between pr-[9px] pl-[9px]">
        <span className="text-[16px] font-semibold tracking-[-0.35px]">Visualizations</span>
        <DoubleChevron />
      </div>
      <div className="mt-[6px] pl-[9px] text-[12.500px] leading-[19px] font-semibold tracking-[-0.45px]">Build visual</div>
      <div className="mt-[3px] flex h-[33px] pl-[9px]">
        <div className="flex size-[33px] items-center justify-center bg-[#cfcdcb]">
          <Svg w={26} h={26}>
            <path d="M1 1.500h19" stroke={K} strokeWidth="1.200" />
            <rect x="1" y="6.500" width="24" height="7" fill="#117865" stroke="#252423" strokeWidth="1" strokeDasharray="1.500 1.500" />
            <rect x="1" y="17.500" width="24" height="7" fill="#117865" stroke="#252423" strokeWidth="1" strokeDasharray="1.500 1.500" />
          </Svg>
        </div>
        <Svg w={26} h={26} className="mt-[4px] ml-[40px]">
          <path d="M7 25H1V1h10l7 7v3M11 1v8h7" fill="#fff" stroke={K} strokeWidth="1.300" />
          <path d="M25 9l-9 9M25 9l-6 11-3-2z" fill="#fff" stroke={K} strokeWidth="1.300" />
          <path d="M8 25c3-1 2-6 6-6.500 3 0 4 3 2 5-2 1.500-5 2-8 1.500z" fill="#fff" stroke={K} strokeWidth="1.300" />
        </Svg>
      </div>
      <Svg w={188} h={10} className="mt-[5px]"><path d="M0 8.500h17l8.500-8 8.500 8h154" stroke="#bfbdbb" strokeWidth="1.500" /></Svg>
      <div className="mt-[12px] grid grid-cols-[repeat(6,29.200px)] pl-[11px]">
        {viz.map((v, i) => <div key={i} className="flex h-[29.150px] items-start"><svg width="20" height="20" viewBox="0 0 20 20" fill="none" overflow="visible">{v}</svg></div>)}
      </div>
      <div className="mt-[1px] border-t-2 border-[#e4e2e0]" />
      <div className="mt-[7px] pl-[12px] text-[12.500px] leading-[20px] tracking-[-0.15px]">Values</div>
      <div className="mt-[3px] mr-[6px] ml-[4px] flex h-[30px] items-center border border-dashed border-[#c8c6c4] bg-white pl-[11px] text-[12.500px] tracking-[-0.3px]">Add data fields here</div>
      <div className="mt-[9px] pl-[12px] text-[12.500px] leading-[20px] font-semibold tracking-[-0.4px]">Drill through</div>
      <div className="mt-[7px] flex h-[18px] items-center justify-between pr-[6px] pl-[12px] text-[12.500px] tracking-[-0.3px]">
        Cross-report
        <div className="flex h-[17px] w-[34px] items-center rounded-full border border-[#8a8886] bg-white pl-[4px]"><i className="size-[9px] rounded-full bg-[#605e5c]" /><span className="ml-[2px] text-[9.500px] tracking-normal text-[#797775]">Off</span></div>
      </div>
      <div className="mt-[10px] flex h-[18px] items-center justify-between pr-[6px] pl-[12px] text-[12.500px] tracking-[-0.3px]">
        Keep all filters
        <div className="flex h-[17px] w-[34px] items-center rounded-full bg-[#605e5c] pl-[5px]"><span className="text-[9.500px] tracking-normal text-white">On</span><i className="ml-[3px] size-[9px] rounded-full bg-white" /></div>
      </div>
      <div className="mt-[11px] mr-[6px] ml-[4px] flex h-[27px] items-center border border-dashed border-[#c8c6c4] bg-white pl-[9px] text-[12.500px] tracking-[-0.28px] whitespace-nowrap">Add drill-through fields here</div>
    </div>
  );
}

/* ---------- fields pane ---------- */
const fields = ["_Measures", "Date", "Movie Cast", "Movie Directors", "Movie Genre", "Movie Main", "Movie Music Composers", "Movie Producers", "Movie Production Com...", "Movie Production Cou...", "Movie Spoken Language", "Movie Writers"];
function FieldsPane() {
  return (
    <div className="flex flex-1 flex-col bg-[#f3f2f1] text-[#323130]">
      <div className="mt-[8px] flex h-[24px] items-center justify-between pr-[8px] pl-[7px]">
        <span className="text-[16px] font-semibold tracking-[-0.35px]">Fields</span>
        <DoubleChevron />
      </div>
      <div className="mt-[15px] mr-[4px] ml-[4px] flex h-[28px] items-center rounded-[2px] border border-[#605e5c] bg-white pl-[7px]">
        <Magnifier size={16} />
        <span className="ml-[6px] text-[13.500px] tracking-[0.05px] text-[#605e5c]">Search</span>
      </div>
      <div className="mt-[9px] flex flex-col">
        {fields.map((f, i) => (
          <div key={f} className="flex h-[25px] items-center pl-[10px]">
            <Svg w={8} h={13}><path d="M1 .8l6 5.700-6 5.700" stroke="#797775" strokeWidth="1.200" /></Svg>
            {i === 0 ? (
              <Svg w={14} h={17} className="ml-[5px]"><path d="M1 16V1h11M3.500 3.500H13V16H3.500z" stroke={K} strokeWidth="1.200" /><path d="M5.500 6h5.500v1.500H5.500zM5.500 10h1.500M8 10h1.500M10 10h1.500M5.500 13h1.500M8 13h1.500M10 13h1.500" stroke={K} strokeWidth="1" /></Svg>
            ) : (
              <div className="ml-[5px]"><TableGlyph w={14} h={13} c={K} /></div>
            )}
            <span className="mt-px ml-[6px] text-[12.500px] tracking-[-0.38px] whitespace-nowrap text-[#484644]">{f}</span>
          </div>
        ))}
      </div>
    </div>
  );
}

/* ---------- report page tooltip ---------- */
const cast = ["Amanda Pace", "Anita Briem", "Azar Vakil", "Camila Villarreal", "Cristi Petrescu", "Devin Ratray", "Eldar Bogunov", "Gary Ambrosia", "Herbert Russell", "Hossein Alami", "Iulia Verdes", "Joey Slotnick", "John Getz", "Karim Nobakht", "Koorosh Davoodi", "Michael Mercurio", "Mike Ligeti", "Nasim Shahed", "Patrick Barfoot", "Rachel Pace", "Ramiro Araujo", "Rasool Abdi", "Richard Magder", "Rob Hambley", "Sarah Molnar", "Shirley Knight", "Tehmina Sunny", "Waleed Zuaiter"];
const facts: [string, string, string][] = [
  ["Elevator", "Movie Title", "mt-[71px]"], ["Eldar Bogunov", "Director", "mt-[89px]"], ["Canada", "Production Country", "mt-[33px]"],
  ["", "Production Company", "mt-[29px]"], ["42.60", "Runtime (min)", "mt-[30px]"], ["5.03", "IMDB Rating", "mt-[27px]"],
];
function Tooltip() {
  return (
    <div className="absolute top-[358px] left-[493px] z-20 flex h-[584px] w-[507px] border border-[#8a8a8a] bg-[#333333] text-white shadow-[0_0_8px_rgba(0,0,0,0.3)]">
      <div className="flex w-[269px] flex-col items-center">
        {facts.map(([v, l, m]) => (
          <div key={l} className={`flex flex-col items-center ${m}`}>
            <span className="h-[30px] font-['Roboto',sans-serif] text-[23px] leading-[30px] font-bold tracking-[-0.4px]">{v}</span>
            <span className="text-[11px] leading-[17px] tracking-[-0.12px] text-[#e6e6e6]">{l}</span>
          </div>
        ))}
      </div>
      <div className="ml-[18px] flex w-[112px] flex-col">
        <div className="h-[27px] border-b border-[#8a8a8a] pt-[3px] pl-[4px] text-[11px] leading-[18px] font-bold tracking-[-0.2px]">Cast</div>
        <ul className="mt-[1px] pl-[4px] text-[12px] leading-[16.880px] font-bold tracking-[-0.2px] whitespace-nowrap">
          {cast.map((c) => <li key={c}>{c}</li>)}
        </ul>
      </div>
    </div>
  );
}

export default function App() {
  return (
    <div className="relative flex h-[945px] w-[1600px] flex-col overflow-hidden bg-white font-['Open_Sans','Noto_Sans',sans-serif]">
      <TitleBar />
      <Ribbon />
      <div className="flex h-[758px] shrink-0">
        <LeftNav />
        <div className="flex w-[1181px] shrink-0 flex-col">
          <div className="flex h-[721px]">
            <Report />
            <div className="flex w-[33px] flex-col items-center bg-white text-[#323130]">
              <DoubleChevron left className="mt-[11px] ml-[2px]" />
              <Svg w={13} h={14} className="mt-[17px] ml-[6px]"><path d="M12 1v12h-1.500L6 9H1V5h5l4.500-4z" stroke={K} strokeWidth="1.200" /></Svg>
              <span className="mt-[8px] ml-[2px] text-[15.500px] leading-[20px] font-semibold tracking-[-0.3px] [writing-mode:vertical-rl]">Filters</span>
            </div>
          </div>
          <PageTabs />
        </div>
        <VizPane />
        <FieldsPane />
      </div>
      <div className="flex h-[20px] shrink-0 items-center border-t border-[#dddbd9] bg-[#f3f2f1] pt-[6px] text-[12.500px] tracking-[-0.2px] text-[#605e5c]">
        <span className="w-[1169px] pl-[5px]">Page 1 of 9</span>
        <Svg w={134} h={14}>
          <path d="M1 7h5M120 7h9M124.500 2.500v9" stroke={K} strokeWidth="1.500" />
          <path d="M11 7h104" stroke="#8a8886" strokeWidth="1.300" />
          <path d="M55 1v12" stroke={K} strokeWidth="4" /><path d="M63 4v6" stroke={K} strokeWidth="1.200" />
        </Svg>
        <span className="ml-[12px] tracking-[-0.5px] text-[#8a8886]">86%</span>
        <Svg w={17} h={14} className="ml-[21px]"><path d="M.7.7h15.600v12.600H.7z" stroke="#797775" strokeWidth="1.300" /><path d="M3.500 5V3h2.500M11 3h2.500v2M13.500 9v2H11M6 11H3.500V9" stroke={K} /></Svg>
        <span className="ml-[18px] tracking-[-0.3px] whitespace-nowrap">Update available (click to download)</span>
      </div>
      <Tooltip />
    </div>
  );
}
